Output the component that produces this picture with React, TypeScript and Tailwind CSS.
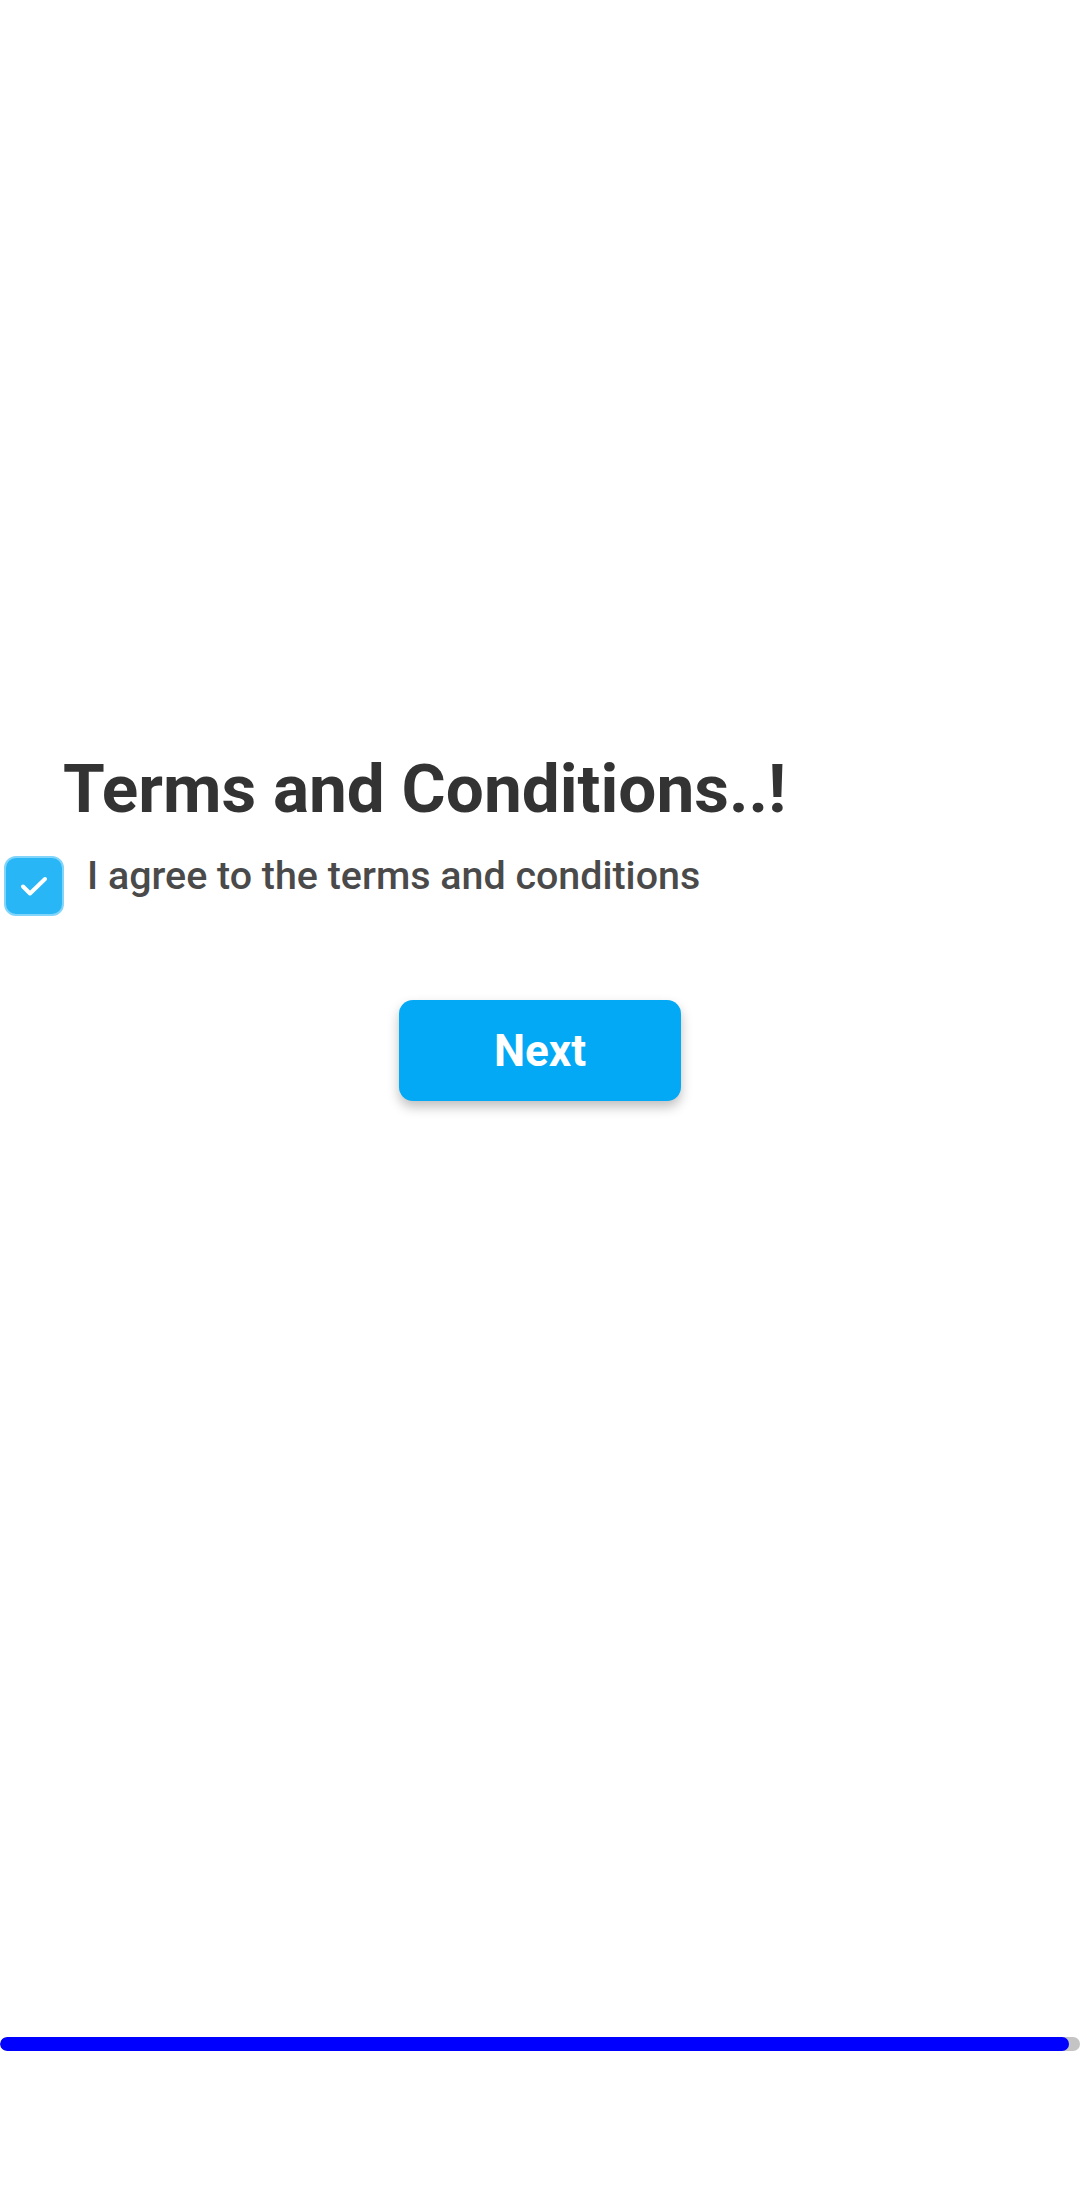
import React, { useState } from 'react';

export default function App() {
  const [agreed, setAgreed] = useState(true);
  const progress = 99;

  return (
    <div className="min-h-[2208px] w-[1080px] bg-white font-['Roboto',sans-serif] flex flex-col">
      <div className="pt-[750px]">
        <h1 className="pl-[63px] text-[67.5px] leading-[78px] font-bold text-[#333333]">
          Terms and Conditions..!
        </h1>

        <div className="mt-[28px] flex items-start">
          <button
            onClick={() => setAgreed(!agreed)}
            className={`ml-[4px] w-[60px] h-[60px] rounded-[12px] border-2 flex items-center justify-center ${
              agreed ? 'bg-[#29b6f6] border-[#81d4fa]' : 'bg-white border-[#9e9e9e]'
            }`}
          >
            {agreed && (
              <svg width="34" height="34" viewBox="0 0 34 34" fill="none">
                <path
                  d="M6 17.5 L13 24.5 L28 10"
                  stroke="white"
                  strokeWidth="4"
                  strokeLinecap="round"
                  strokeLinejoin="round"
                />
              </svg>
            )}
          </button>
          <span className="ml-[23px] -mt-[3px] text-[39.4px] leading-[46px] font-medium text-[#4a4a4a]">
            I agree to the terms and conditions
          </span>
        </div>

        <div className="mt-[84px] flex justify-center">
          <button className="w-[282px] h-[101px] rounded-[14px] bg-[#03a9f4] text-white text-[44px] font-bold shadow-[0_6px_12px_rgba(0,0,0,0.25)]">
            Next
          </button>
        </div>
      </div>

      <div className="mt-[936px] h-[14px] w-full rounded-full bg-[#c4c4c4] overflow-hidden">
        <div className="h-full rounded-full bg-[#0000ff]" style={{ width: `${progress}%` }} />
      </div>
    </div>
  );
}
